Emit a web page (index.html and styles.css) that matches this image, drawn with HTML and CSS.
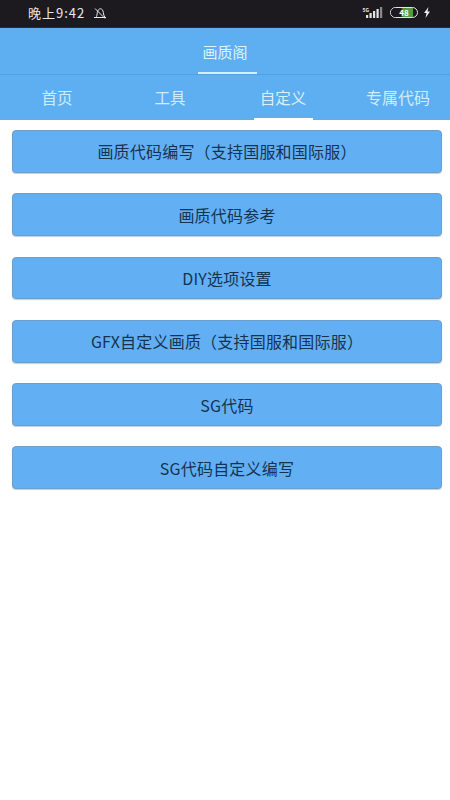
FILE: index.html
```html
<!DOCTYPE html>
<html lang="zh">
<head>
<meta charset="utf-8">
<title>画质阁</title>
<link rel="stylesheet" href="styles.css">
</head>
<body>
<div class="status">
  <div class="status-left">
    <span>晚上9:42</span>
    <svg class="bell" viewBox="0 0 14 12" width="14" height="12"><path d="M1 10.500h12M3 10.500c1-1.500 1-3 1.300-5C4.700 3 6 1.800 7.500 1.800S10 3.200 10.300 5.500c.2 2 .7 3.500 1.700 5M2 1.500l10 10" fill="none" stroke="#e8e8e8" stroke-width="1"/></svg>
  </div>
  <div class="status-right">
    <span class="net">5G</span>
    <svg class="signal" viewBox="0 0 17 11" width="17" height="11"><g fill="#e4e4e4"><rect x="0" y="8" width="2.200" height="3"/><rect x="3.500" y="6" width="2.200" height="5"/><rect x="7" y="4" width="2.200" height="7"/><rect x="10.500" y="2" width="2.200" height="9"/></g><rect x="14" y="0" width="2.200" height="11" fill="#8a8a8a"/></svg>
    <div class="battery"><div class="battery-fill"></div><span class="battery-num">48</span></div>
    <svg class="bolt" viewBox="0 0 8 11" width="8" height="11"><path d="M5.500 0 1 6h2.500L2.500 11 7 4.500H4.500z" fill="#eee"/></svg>
  </div>
</div>
<header class="title-bar">
  <div class="title">画质阁</div>
</header>
<nav class="tabs">
  <div class="tab"><span class="tab-label">首页</span></div>
  <div class="tab"><span class="tab-label">工具</span></div>
  <div class="tab active"><span class="tab-label">自定义</span></div>
  <div class="tab"><span class="tab-label">专属代码</span></div>
</nav>
<main class="list">
  <button class="item">画质代码编写（支持国服和国际服）</button>
  <button class="item">画质代码参考</button>
  <button class="item">DIY选项设置</button>
  <button class="item">GFX自定义画质（支持国服和国际服）</button>
  <button class="item">SG代码</button>
  <button class="item">SG代码自定义编写</button>
</main>
</body>
</html>
```
FILE: styles.css
```css
* { box-sizing: border-box; }
html, body { margin: 0; padding: 0; }
body {
  width: 450px;
  height: 800px;
  overflow: hidden;
  background: #fff;
  font-family: "Noto Sans CJK SC", "Noto Sans", sans-serif;
}
.status {
  height: 28px;
  background: #1c1a1e;
  border-bottom: 1px solid #10324f;
  display: flex;
  justify-content: space-between;
  align-items: center;
  padding: 0 19px 2px 28px;
  color: #e8e8e8;
  font-size: 13px;
  letter-spacing: 1px;
}
.status-left { display: flex; align-items: center; gap: 8px; }
.status-right { display: flex; align-items: center; }
.net { font-size: 5px; line-height: 6px; letter-spacing: 0; align-self: flex-start; margin: 0 -3px 0 0; font-weight: 700; }
.signal { margin-right: 7px; }
.battery {
  width: 28px;
  height: 11px;
  border: 1px solid #e4e4e4;
  border-radius: 6px;
  position: relative;
  overflow: hidden;
  display: flex;
  justify-content: center;
  align-items: center;
  margin-right: 5px;
}
.battery-fill { position: absolute; left: 0; top: 0; bottom: 0; width: 22px; background: linear-gradient(90deg, #1c1a1e 45%, #4f9d45 55%); }
.battery-num { position: relative; font-size: 8px; line-height: 9px; letter-spacing: 0; color: #fff; font-weight: 700; }
.title-bar {
  height: 47px;
  background: #5eaef2;
  border-bottom: 1px solid #54a0df;
  display: flex;
  justify-content: center;
  padding-left: 4px;
}
.title {
  width: 59px;
  height: 46px;
  border-bottom: 2px solid #d4f0fb;
  padding-right: 4px;
  color: #dff3fb;
  font-size: 15px;
  line-height: 47px;
  text-align: center;
  white-space: nowrap;
}
.tabs {
  height: 45px;
  background: #5eaef2;
  box-shadow: inset 0 -1px 0 #6fa9d6;
  display: flex;
}
.tab {
  color: #cdeefa;
  font-size: 15.500px;
  line-height: 44px;
  text-align: center;
  height: 45px;
  display: flex;
  justify-content: center;
}
.tab:nth-child(1) { width: 114px; }
.tab:nth-child(2) { width: 112px; }
.tab:nth-child(3) { width: 114px; }
.tab:nth-child(4) { width: 110px; padding-left: 6px; font-size: 16px; }
.tab-label { display: block; height: 45px; }
.active .tab-label { width: 59px; border-bottom: 2px solid #fff; color: #d8f1fb; }
.list {
  display: flex;
  flex-direction: column;
  gap: 20.400px;
  padding: 10px 8px 0 12px;
}
.item {
  display: block;
  width: 430px;
  height: 42.900px;
  padding: 0;
  background: #62aff4;
  border: 1px solid #6b9fcb;
  border-radius: 4px;
  color: #15334f;
  font-family: inherit;
  font-size: 16px;
  letter-spacing: .2px;
  text-align: center;
  box-shadow: 0 1px 1px rgba(60,90,120,.3);
}
```
